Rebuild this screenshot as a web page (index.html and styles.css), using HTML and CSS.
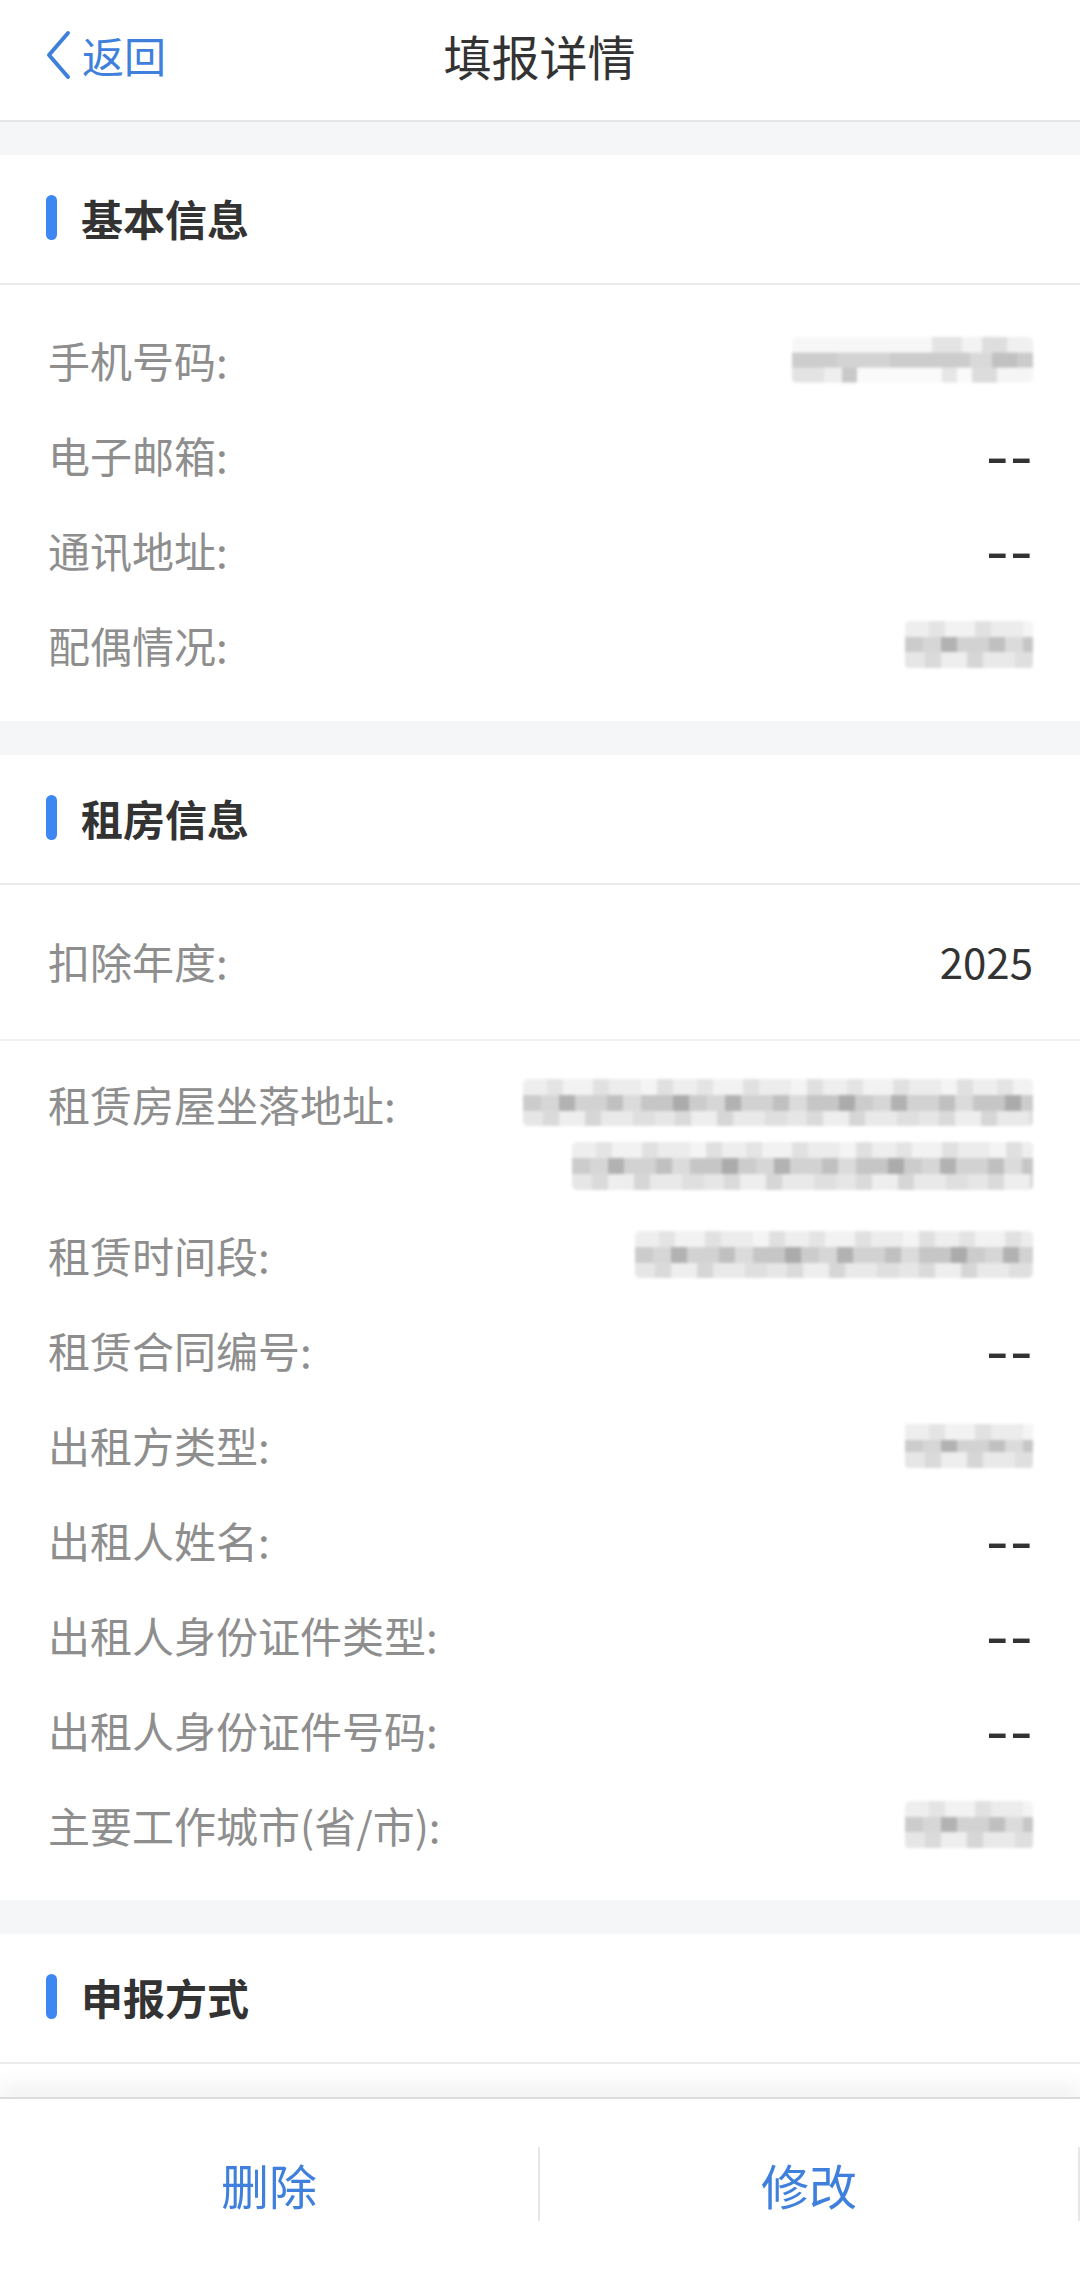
FILE: index.html
```html
<!DOCTYPE html>
<html>
  <head>
    <meta charset="UTF-8">
    <title>填报详情</title>
    <link rel="stylesheet" href="styles.css">
  </head>
  <body>

    <header class="nav-bar">
      <a class="nav-bar__back">
        <svg class="nav-bar__chevron" viewBox="0 0 26 50">
          <polyline points="23,3 4,25 23,47" fill="none" stroke="#3f80dc" stroke-width="4" stroke-linecap="round" stroke-linejoin="round"/>
        </svg>
        <span>返回</span>
      </a>
      <h1 class="nav-bar__title">填报详情</h1>
      <span class="nav-bar__spacer"></span>
    </header>

    <main>
      <section class="panel">
        <h2 class="panel__title">基本信息</h2>
        <div class="panel__group">
          <div class="row">
            <span class="row__label">手机号码:</span>
            <span class="mosaic mosaic--phone"></span>
          </div>
          <div class="row">
            <span class="row__label">电子邮箱:</span>
            <span class="row__value row__value--empty">--</span>
          </div>
          <div class="row">
            <span class="row__label">通讯地址:</span>
            <span class="row__value row__value--empty">--</span>
          </div>
          <div class="row">
            <span class="row__label">配偶情况:</span>
            <span class="mosaic mosaic--short"></span>
          </div>
        </div>
      </section>

      <section class="panel">
        <h2 class="panel__title">租房信息</h2>
        <div class="panel__group panel__group--year">
          <div class="row">
            <span class="row__label">扣除年度:</span>
            <span class="row__value">2025</span>
          </div>
        </div>
        <div class="panel__group panel__group--rent">
          <div class="row row--tall">
            <span class="row__label">租赁房屋坐落地址:</span>
            <span class="row__lines">
              <span class="mosaic mosaic--addr1"></span>
              <span class="mosaic mosaic--addr2"></span>
            </span>
          </div>
          <div class="row">
            <span class="row__label">租赁时间段:</span>
            <span class="mosaic mosaic--period"></span>
          </div>
          <div class="row">
            <span class="row__label">租赁合同编号:</span>
            <span class="row__value row__value--empty">--</span>
          </div>
          <div class="row">
            <span class="row__label">出租方类型:</span>
            <span class="mosaic mosaic--short mosaic--alt"></span>
          </div>
          <div class="row">
            <span class="row__label">出租人姓名:</span>
            <span class="row__value row__value--empty">--</span>
          </div>
          <div class="row">
            <span class="row__label">出租人身份证件类型:</span>
            <span class="row__value row__value--empty">--</span>
          </div>
          <div class="row">
            <span class="row__label">出租人身份证件号码:</span>
            <span class="row__value row__value--empty">--</span>
          </div>
          <div class="row">
            <span class="row__label">主要工作城市(省/市):</span>
            <span class="mosaic mosaic--short"></span>
          </div>
        </div>
      </section>

      <section class="panel panel--last">
        <h2 class="panel__title">申报方式</h2>
        <div class="panel__group panel__group--empty"></div>
      </section>
    </main>

    <footer class="action-bar">
      <a class="action-bar__btn">删除</a>
      <a class="action-bar__btn">修改</a>
    </footer>

  </body>
</html>
```

FILE: styles.css
```css
* {
  box-sizing: border-box;
}
body {
  margin: 0;
  background-color: #f5f6f8;
  font-family: "Noto Sans CJK SC", "Noto Sans", sans-serif;
  color: #333;
}

.nav-bar {
  height: 122px;
  padding: 0 46px 10px 45px;
  display: flex;
  align-items: center;
  background-color: #fff;
  border-bottom: solid 2px #e6e6e6;
}
.nav-bar__back {
  flex: 1;
  display: flex;
  align-items: center;
  color: #3f80dc;
  font-size: 42px;
  line-height: 1;
}
.nav-bar__chevron {
  width: 26px;
  height: 50px;
  margin-right: 11px;
}
.nav-bar__title {
  margin: 0;
  font-size: 48px;
  font-weight: 400;
  color: #333;
  line-height: 1;
}
.nav-bar__spacer {
  flex: 1;
}

main {
  padding-top: 33px;
}

.panel {
  background-color: #fff;
  margin-bottom: 34px;
}
.panel__title {
  margin: 0;
  height: 130px;
  padding: 0 0 4px 46px;
  display: flex;
  align-items: center;
  font-size: 42px;
  font-weight: 700;
  color: #333;
  border-bottom: solid 2px #ebebeb;
}
.panel__title::before {
  content: "";
  width: 11px;
  height: 45px;
  border-radius: 6px;
  background-color: #3d87f2;
  margin-right: 24px;
}
.panel__group {
  padding: 27px 47px 29px 48px;
}
.panel__group--year {
  padding-top: 28px;
  padding-bottom: 31px;
  border-bottom: solid 2px #f0f0f0;
}
.panel__group--rent {
  padding-top: 15px;
  padding-bottom: 28px;
}
.panel__group--empty {
  height: 260px;
}

.row {
  display: flex;
  justify-content: space-between;
  align-items: center;
  min-height: 95px;
  padding: 17px 0;
  font-size: 42px;
  line-height: 61px;
}
.row--tall {
  align-items: flex-start;
}
.row__label {
  color: #8e8e8e;
  white-space: nowrap;
}
.row__value {
  color: #333;
}
.row__value--empty {
  display: inline-block;
  font-weight: 700;
  letter-spacing: 1px;
  margin-right: -1px;
  transform: scaleX(1.45);
  transform-origin: right center;
}
.row__lines {
  display: flex;
  flex-direction: column;
  align-items: flex-end;
  gap: 16px;
  padding-top: 6px;
}

/* blurred values */
.mosaic {
  display: block;
  height: 46px;
  border-radius: 5px;
  filter: blur(1.5px);
  background-repeat: no-repeat;
  background-size: 100% 34%;
  background-position: 0 0, 0 50%, 0 100%;
  background-image:
    repeating-linear-gradient(90deg, #eeeeee 0 24px, #e4e4e4 24px 40px, #f2f2f2 40px 70px, #e1e1e1 70px 86px, #ececec 86px 118px, #f4f4f4 118px 134px, #e0e0e0 134px 150px),
    repeating-linear-gradient(90deg, #cccccc 0 18px, #d6d6d6 18px 36px, #b2b2b2 36px 52px, #d2d2d2 52px 84px, #c0c0c0 84px 100px, #dbdbdb 100px 118px, #c6c6c6 118px 150px, #ababab 150px 166px),
    repeating-linear-gradient(90deg, #e6e6e6 0 20px, #dadada 20px 36px, #eeeeee 36px 62px, #d6d6d6 62px 78px, #e9e9e9 78px 110px, #dfdfdf 110px 132px);
}
.mosaic--phone {
  width: 241px;
  background-image:
    linear-gradient(90deg, #f7f7f7 0 140px, #e4e4e4 140px 170px, #f3f3f3 170px 190px, #dedede 190px 215px, #f0f0f0 215px),
    linear-gradient(90deg, #cdcdcd 0 45px, #d3d3d3 45px 98px, #cccccc 98px 178px, #d9d9d9 178px 200px, #c1c1c1 200px 225px, #cbcbcb 225px),
    linear-gradient(90deg, #e3e3e3 0 32px, #eeeeee 32px 50px, #c9c9c9 50px 65px, #fafafa 65px 150px, #e6e6e6 150px 165px, #fafafa 165px 180px, #dcdcdc 180px 205px, #f5f5f5 205px);
}
.mosaic--short {
  width: 128px;
  height: 48px;
}
.mosaic--alt {
  background-position: 0 10%, 0 50%, 0 100%;
}
.mosaic--addr1 {
  width: 510px;
  height: 47px;
}
.mosaic--addr2 {
  width: 461px;
  height: 48px;
}
.mosaic--period {
  width: 398px;
  height: 47px;
}

.action-bar {
  position: fixed;
  left: 0;
  right: 0;
  bottom: 0;
  height: 172px;
  display: flex;
  align-items: center;
  background-color: #fff;
  border-top: solid 2px #dcdcdc;
  box-shadow: 0 -14px 20px rgba(0, 0, 0, 0.05);
}
.action-bar__btn {
  flex: 1;
  height: 74px;
  display: flex;
  align-items: center;
  justify-content: center;
  border-right: solid 2px #e6e6e6;
  font-size: 48px;
  color: #3f80dc;
}
```
